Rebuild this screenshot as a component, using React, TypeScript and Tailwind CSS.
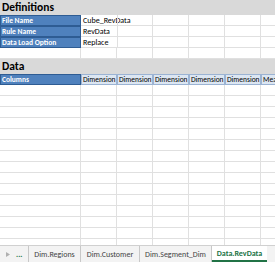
const font = { fontFamily: 'Carlito, Lato, "Liberation Sans", sans-serif' }

const widths = ['w-[81px]', 'w-[36px]', 'w-[36px]', 'w-[36px]', 'w-[36px]', 'w-[36px]', 'w-[36px]']

function GridRow() {
  return (
    <div className="flex h-[11px] shrink-0">
      {widths.map((w, i) => (
        <div key={i} className={`${w} shrink-0 border-r border-b border-[#e0e0e0]`} />
      ))}
    </div>
  )
}

function SectionHeader({ title }: { title: string }) {
  return (
    <div className="flex h-[15px] shrink-0 items-center bg-[#d9d9d9] pl-[2px] text-[11.5px] font-bold leading-none text-black">
      {title}
    </div>
  )
}

function DefRow({ label, value }: { label: string; value: string }) {
  return (
    <div className="flex h-[11px] shrink-0">
      <div className="flex w-[81px] shrink-0 items-center border border-[#2e5c93] bg-[#4f81bd] pl-[1px] text-[7.5px] font-bold leading-none text-white">
        {label}
      </div>
      <div className="flex w-[36px] shrink-0 items-center overflow-visible whitespace-nowrap border-b border-[#e0e0e0] pl-[2px] text-[8px] leading-none text-black">
        {value}
      </div>
      {widths.slice(2).map((w, i) => (
        <div key={i} className={`${w} shrink-0 border-r border-b border-[#e0e0e0] ${i === 0 ? 'border-l' : ''}`} />
      ))}
    </div>
  )
}

function ColumnsRow() {
  const heads = ['Dimension', 'Dimension', 'Dimension', 'Dimension', 'Dimension', 'Measure']
  return (
    <div className="flex h-[11px] shrink-0">
      <div className="flex w-[81px] shrink-0 items-center border border-[#2e5c93] bg-[#4f81bd] pl-[1px] text-[7.5px] font-bold leading-none text-white">
        Columns
      </div>
      {heads.map((h, i) => (
        <div
          key={i}
          className="flex w-[36px] shrink-0 items-center overflow-hidden whitespace-nowrap border border-[#9bb3d3] bg-[#dce6f2] pl-[1px] text-[7.5px] leading-none text-black"
        >
          {h}
        </div>
      ))}
    </div>
  )
}

function Tab({ label, width, active }: { label: string; width: string; active?: boolean }) {
  if (active) {
    return (
      <div className={`${width} flex h-full shrink-0 items-center justify-center border-b-2 border-[#217346] bg-white text-[8px] font-bold text-[#217346]`}>
        {label}
      </div>
    )
  }
  return (
    <div className={`${width} flex h-full shrink-0 items-center justify-center border-r border-[#c8c8c8] text-[8px] text-[#444]`}>
      {label}
    </div>
  )
}

export default function App() {
  return (
    <div className="flex h-[262px] w-[275px] flex-col overflow-hidden bg-white" style={font}>
      <div className="flex flex-1 flex-col overflow-hidden">
        <SectionHeader title="Definitions" />
        <DefRow label="File Name" value="Cube_RevData" />
        <DefRow label="Rule Name" value="RevData" />
        <DefRow label="Data Load Option" value="Replace" />
        <GridRow />
        <SectionHeader title="Data" />
        <ColumnsRow />
        {Array.from({ length: 16 }).map((_, i) => (
          <GridRow key={i} />
        ))}
      </div>
      <div className="flex h-[17px] shrink-0 items-stretch border-t border-[#d0d0d0] bg-[#f3f3f3]">
        <div className="flex w-[29px] shrink-0 items-center gap-[6px] border-r border-[#c8c8c8] pl-[6px]">
          <svg width="4" height="5" viewBox="0 0 4 5">
            <path d="M0 0 L4 2.5 L0 5 Z" fill="#b0b0b0" />
          </svg>
          <span className="text-[8px] font-bold leading-none text-[#217346]">...</span>
        </div>
        <Tab label="Dim.Regions" width="w-[52px]" />
        <Tab label="Dim.Customer" width="w-[59px]" />
        <Tab label="Dim.Segment_Dim" width="w-[72px]" />
        <Tab label="Data.RevData" width="w-[55px]" active />
      </div>
    </div>
  )
}
